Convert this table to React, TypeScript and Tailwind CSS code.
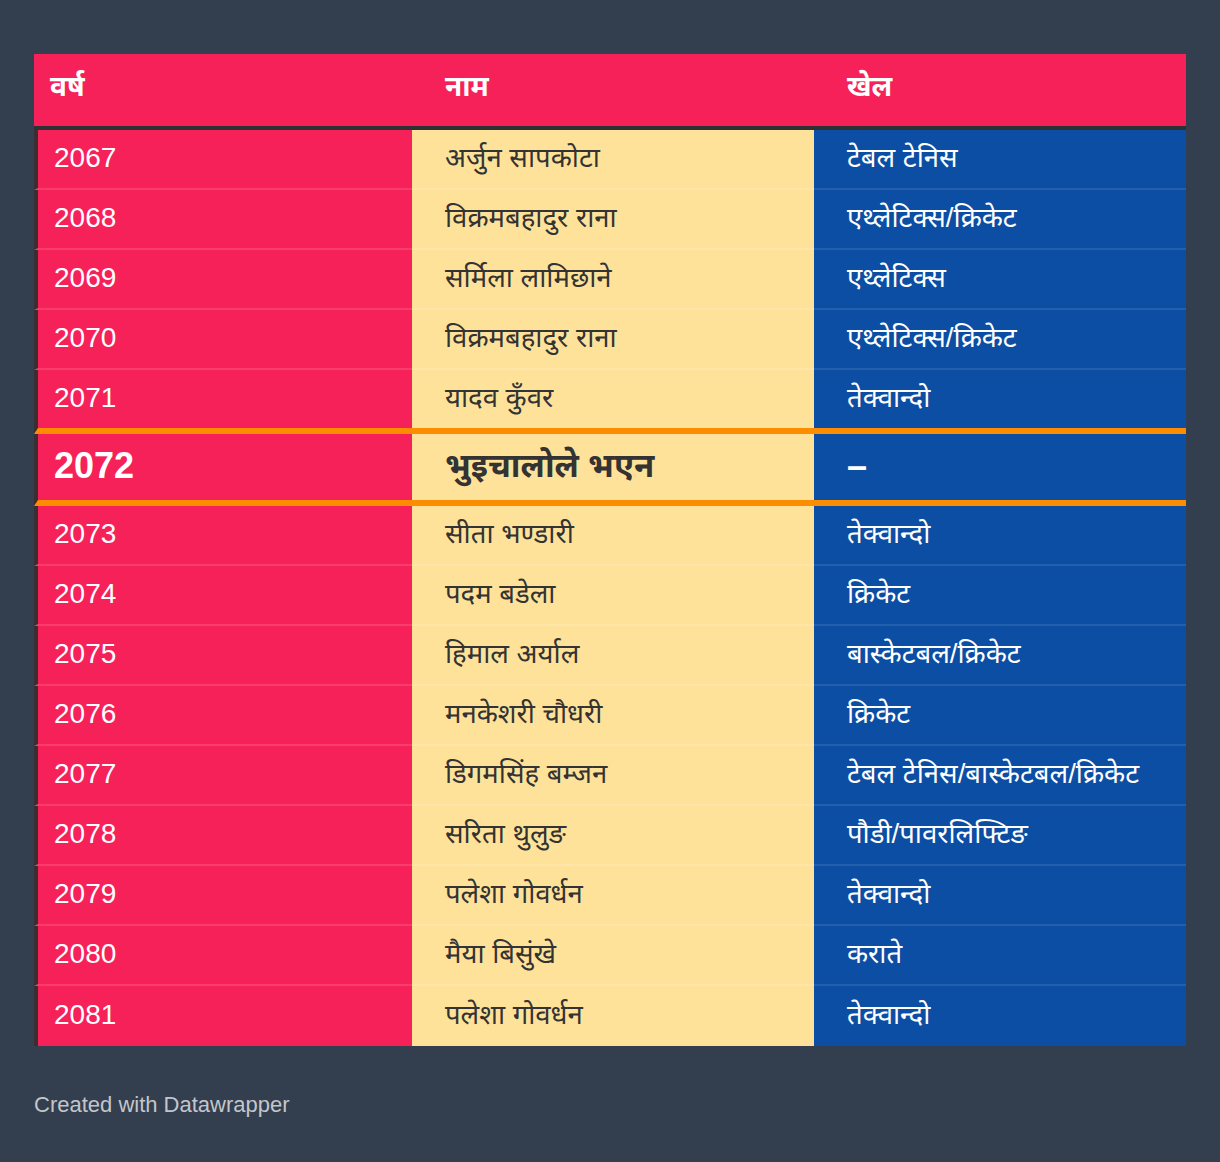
const rows = [
  { year: '2067', name: 'अर्जुन सापकोटा', sport: 'टेबल टेनिस' },
  { year: '2068', name: 'विक्रमबहादुर राना', sport: 'एथ्लेटिक्स/क्रिकेट' },
  { year: '2069', name: 'सर्मिला लामिछाने', sport: 'एथ्लेटिक्स' },
  { year: '2070', name: 'विक्रमबहादुर राना', sport: 'एथ्लेटिक्स/क्रिकेट' },
  { year: '2071', name: 'यादव कुँवर', sport: 'तेक्वान्दो' },
  { year: '2072', name: 'भुइचालोले भएन', sport: '–', special: true },
  { year: '2073', name: 'सीता भण्डारी', sport: 'तेक्वान्दो' },
  { year: '2074', name: 'पदम बडेला', sport: 'क्रिकेट' },
  { year: '2075', name: 'हिमाल अर्याल', sport: 'बास्केटबल/क्रिकेट' },
  { year: '2076', name: 'मनकेशरी चौधरी', sport: 'क्रिकेट' },
  { year: '2077', name: 'डिगमसिंह बम्जन', sport: 'टेबल टेनिस/बास्केटबल/क्रिकेट' },
  { year: '2078', name: 'सरिता थुलुङ', sport: 'पौडी/पावरलिफ्टिङ' },
  { year: '2079', name: 'पलेशा गोवर्धन', sport: 'तेक्वान्दो' },
  { year: '2080', name: 'मैया बिसुंखे', sport: 'कराते' },
  { year: '2081', name: 'पलेशा गोवर्धन', sport: 'तेक्वान्दो' },
];

const font = { fontFamily: '"Liberation Sans", "Noto Sans", sans-serif' };

export default function App() {
  return (
    <div className="min-h-[1162px] w-[1220px] bg-[#333e4e] pt-[54px] px-[34px]" style={font}>
      {/* header */}
      <div className="flex h-[76px] bg-[#f7215a] border-b-4 border-b-[#2f3033] text-white font-bold text-[28px]">
        <div className="w-[378px] pl-4 pt-[12px]">वर्ष</div>
        <div className="w-[402px] pl-[33px] pt-[12px]">नाम</div>
        <div className="flex-1 pl-[33px] pt-[12px]">खेल</div>
      </div>

      {/* body */}
      <div>
        {rows.map((r, i) => {
          const next = rows[i + 1];
          const last = i === rows.length - 1;
          const beforeSpecial = next?.special;
          const orange = r.special || beforeSpecial;
          const bottom = orange ? 'border-b-[6px] border-b-[#fc8c00]' : last ? '' : 'border-b-2';
          const h = r.special ? 'h-[72px]' : beforeSpecial ? 'h-[64px]' : 'h-[60px]';
          return (
            <div key={r.year} className={`flex ${h}`}>
              <div
                className={`w-[378px] flex items-center pl-4 pb-[3px] bg-[#f7215a] text-white border-l-4 border-l-[#3b2e30] ${bottom} ${
                  orange ? '' : 'border-b-[#f93d6b]'
                } ${r.special ? 'text-[36px] font-bold' : 'text-[28px]'}`}
              >
                {r.year}
              </div>
              <div
                className={`w-[402px] flex items-center pl-[33px] pb-[3px] bg-[#ffe29a] text-[#333333] ${bottom} ${
                  orange ? '' : 'border-b-[#ffe6a8]'
                } ${r.special ? 'text-[33px] font-bold' : 'text-[27.5px]'}`}
              >
                {r.name}
              </div>
              <div
                className={`flex-1 flex items-center pl-[33px] pb-[3px] bg-[#0c4ea3] text-white ${bottom} ${
                  orange ? '' : 'border-b-[#225fac]'
                } ${r.special ? 'text-[36px] font-bold' : 'text-[27.5px]'}`}
              >
                {r.sport}
              </div>
            </div>
          );
        })}
      </div>

      <div className="mt-[42px] text-[22px] text-[#c3c6cb]">Created with Datawrapper</div>
    </div>
  );
}
